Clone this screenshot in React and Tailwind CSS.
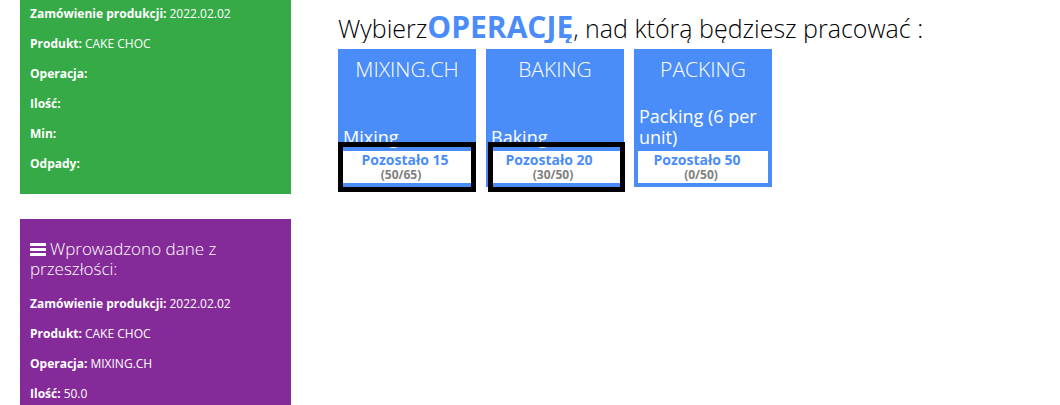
const ORDER = [
  ["Zamówienie produkcji:", "2022.02.02"],
  ["Produkt:", "CAKE CHOC"],
  ["Operacja:", ""],
  ["Ilość:", ""],
  ["Min:", ""],
  ["Odpady:", ""],
];

const HISTORY = [
  ["Zamówienie produkcji:", "2022.02.02"],
  ["Produkt:", "CAKE CHOC"],
  ["Operacja:", "MIXING.CH"],
  ["Ilość:", "50.0"],
];

const OPERATIONS = [
  { code: "MIXING.CH", name: "Mixing", left: 15, progress: "(50/65)", frame: "inset-x-0", leftPad: "pr-1", progressPad: "pr-3" },
  { code: "BAKING", name: "Baking", left: 20, progress: "(30/50)", frame: "left-[2px] -right-px", leftPad: "pr-3", progressPad: "pr-1" },
  { code: "PACKING", name: "Packing (6 per unit)", left: 50, progress: "(0/50)", frame: "", leftPad: "pr-3", progressPad: "pr-1" },
];

function BarsIcon() {
  return (
    <svg className="mr-1 inline-block h-[13px] w-[16px] align-[-1px]" viewBox="0 0 16 13" fill="currentColor" aria-hidden="true">
      <rect x="0" y="0" width="16" height="3" rx="0.5" />
      <rect x="0" y="5" width="16" height="3" rx="0.5" />
      <rect x="0" y="10" width="16" height="3" rx="0.5" />
    </svg>
  );
}

function Details({ rows }) {
  return (
    <dl className="flex flex-col gap-[10px] text-[12px] leading-[20px]">
      {rows.map(([label, value]) => (
        <div key={label} className="flex gap-[3px]">
          <dt className="font-bold">{label}</dt>
          <dd>{value}</dd>
        </div>
      ))}
    </dl>
  );
}

function OperationTile({ op }) {
  return (
    <button type="button" className="relative flex h-[138px] w-[138px] flex-col bg-[#4b8df8] p-1 text-left text-white">
      <span className="w-full pt-[3px] text-center text-[21px] leading-[26px] font-light">{op.code}</span>
      <span className="mt-auto pl-px text-[18px] leading-[21px]">{op.name}</span>
      <span className="mt-[3px] flex h-8 w-full flex-col bg-white text-center font-bold">
        <span className={`text-[14px] leading-[18px] text-[#4b8df8] ${op.leftPad}`}>Pozostało {op.left}</span>
        <span className={`text-[12px] leading-[12px] text-[#808080] ${op.progressPad}`}>{op.progress}</span>
      </span>
      {op.frame && <span aria-hidden="true" className={`absolute top-[93px] h-[50px] border-5 border-black ${op.frame}`} />}
    </button>
  );
}

export default function App() {
  return (
    <div className="flex min-h-screen items-stretch gap-[47px] bg-white pl-5 font-['Open_Sans',sans-serif]">
      <aside className="flex w-[271px] shrink-0 flex-col gap-[25px] text-white">
        <section className="bg-[#35aa47] px-[10px] pt-1 pb-5">
          <Details rows={ORDER} />
        </section>
        <section className="grow bg-[#852b99] px-[10px] pt-5">
          <h2 className="mb-[15px] text-[17px] leading-[20px] font-light">
            <BarsIcon />
            Wprowadzono dane z przeszłości:
          </h2>
          <Details rows={HISTORY} />
        </section>
      </aside>
      <main className="min-w-0 grow pt-3">
        <h1 className="h-[31px] overflow-hidden text-[25px] leading-[30px] font-light text-black">
          Wybierz<strong className="text-[30px] font-bold text-[#4b8df8]">OPERACJĘ</strong>, nad którą będziesz pracować :
        </h1>
        <div className="mt-[6px] flex flex-wrap gap-[10px]">
          {OPERATIONS.map((op) => (
            <OperationTile key={op.code} op={op} />
          ))}
        </div>
      </main>
    </div>
  );
}
